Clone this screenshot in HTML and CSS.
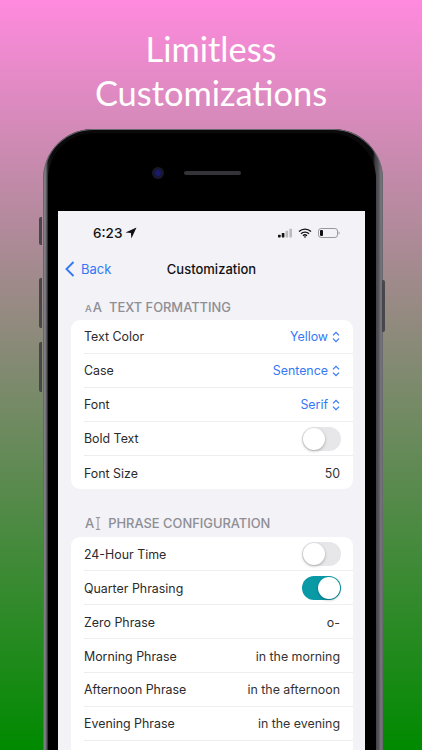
FILE: index.html
```html
<!DOCTYPE html>
<html lang="en">
<head>
<meta charset="utf-8">
<title>Limitless Customizations</title>
<link rel="stylesheet" href="styles.css">
</head>
<body>
<main class="page">
  <h1 class="headline">Limitless<br>Customizations</h1>
  <div class="phone">
    <span class="side-btn btn-mute"></span>
    <span class="side-btn btn-up"></span>
    <span class="side-btn btn-down"></span>
    <span class="side-btn btn-power"></span>
    <div class="bezel">
      <div class="speaker-row">
        <span class="camera"></span>
        <span class="speaker"></span>
      </div>
      <div class="screen">
        <div class="statusbar">
          <div class="status-time">6:23
            <svg class="loc" viewBox="0 0 12 12"><path d="M11.5.5.5 5.6l5.4.5.5 5.4z" fill="#111"/></svg>
          </div>
          <div class="status-icons">
            <svg class="signal" viewBox="0 0 16 10"><rect x="0" y="7" width="3" height="3" rx=".7" fill="#111"/><rect x="4.3" y="5" width="3" height="5" rx=".7" fill="#111"/><rect x="8.6" y="2.5" width="3" height="7.5" rx=".7" fill="#bbb"/><rect x="13" y="0" width="3" height="10" rx=".7" fill="#bbb"/></svg>
            <svg class="wifi" viewBox="0 0 14 10"><path d="M1 3.6a8.6 8.6 0 0 1 12 0M3 5.7a5.8 5.8 0 0 1 8 0M5 7.7a3 3 0 0 1 4 0" fill="none" stroke="#111" stroke-width="1.4"/><path d="M7 10 5.8 8.7a1.8 1.8 0 0 1 2.4 0z" fill="#111"/></svg>
            <svg class="battery" viewBox="0 0 22 10"><rect x=".5" y=".5" width="19" height="9" rx="2.6" fill="none" stroke="#999"/><rect x="2" y="2" width="3" height="6" rx="1" fill="#111"/><path d="M20.6 3.5v3a1.6 1.6 0 0 0 0-3z" fill="#999"/></svg>
          </div>
        </div>
        <nav class="navbar">
          <a class="back">
            <svg class="chev" viewBox="0 0 10 16"><path d="M8.5 1 1.5 8l7 7" fill="none" stroke="#3478f6" stroke-width="1.9"/></svg>
            Back
          </a>
          <div class="nav-title">Customization</div>
        </nav>

        <div class="section-head first">
          <span class="aa"><small>A</small>A</span>
          <span>TEXT FORMATTING</span>
        </div>
        <section class="card">
          <div class="row"><span>Text Color</span><span class="pick">Yellow <svg class="updown" viewBox="0 0 8 12"><path d="M1 4.4 4 1.4l3 3M1 7.6l3 3 3-3" fill="none" stroke="#3478f6" stroke-width="1.2"/></svg></span></div>
          <div class="row"><span>Case</span><span class="pick">Sentence <svg class="updown" viewBox="0 0 8 12"><path d="M1 4.4 4 1.4l3 3M1 7.6l3 3 3-3" fill="none" stroke="#3478f6" stroke-width="1.2"/></svg></span></div>
          <div class="row"><span>Font</span><span class="pick">Serif <svg class="updown" viewBox="0 0 8 12"><path d="M1 4.4 4 1.4l3 3M1 7.6l3 3 3-3" fill="none" stroke="#3478f6" stroke-width="1.2"/></svg></span></div>
          <div class="row"><span>Bold Text</span><span class="toggle"></span></div>
          <div class="row"><span>Font Size</span><span class="val">50</span></div>
        </section>

        <div class="section-head second">
          <span class="aa">A<svg class="ibeam" viewBox="0 0 6 13"><path d="M.8.6h4.4M.8 12.4h4.4M3 .6v11.8" fill="none" stroke="#8e8e93" stroke-width="1"/></svg></span>
          <span>PHRASE CONFIGURATION</span>
        </div>
        <section class="card">
          <div class="row"><span>24-Hour Time</span><span class="toggle"></span></div>
          <div class="row"><span>Quarter Phrasing</span><span class="toggle on"></span></div>
          <div class="row"><span>Zero Phrase</span><span class="val">o-</span></div>
          <div class="row"><span>Morning Phrase</span><span class="val">in the morning</span></div>
          <div class="row"><span>Afternoon Phrase</span><span class="val">in the afternoon</span></div>
          <div class="row"><span>Evening Phrase</span><span class="val">in the evening</span></div>
          <div class="row"></div>
        </section>
      </div>
    </div>
  </div>
</main>
</body>
</html>
```
FILE: styles.css
```css
* { box-sizing: border-box; }
html, body { margin: 0; padding: 0; height: 100%; }
body { overflow: hidden; }
.page {
  width: 422px;
  height: 750px;
  overflow: hidden;
  background: linear-gradient(180deg, #ff8ade 0%, #008a00 100%);
  display: flex;
  flex-direction: column;
  align-items: flex-start;
  font-family: Inter, "Liberation Sans", sans-serif;
}
.headline {
  flex: none;
  width: 422px;
  margin: 27px 0 0;
  color: #fff;
  font-family: Lato, sans-serif;
  font-weight: 400;
  font-size: 34.4px;
  line-height: 44px;
  text-align: center;
  height: 102px;
}
.phone {
  position: relative;
  flex: none;
  width: 340px;
  height: 660px;
  margin-left: 43px;
  border-radius: 50px 50px 0 0;
  background: linear-gradient(90deg, #6f6d73 0, #85838a 2px, #4c4b50 4px, #1a1a1d 5px, #0a0a0c 9px, #0a0a0c calc(100% - 10px), #3b3a40 calc(100% - 8px), #5a585f calc(100% - 4px), #7a7880 calc(100% - 2px), #5e5c62 100%);
  padding: 4px 7px 0 5px;
}
.phone::before {
  content: "";
  position: absolute;
  inset: 0;
  border-radius: inherit;
  border: 1px solid #6a686e;
  border-bottom: 0;
  pointer-events: none;
}
.side-btn {
  position: absolute;
  width: 3px;
  background: #47464b;
}
.btn-mute { left: -4px; top: 88px; height: 28px; border-radius: 2px 0 0 2px; }
.btn-up { left: -4px; top: 149px; height: 50px; border-radius: 2px 0 0 2px; }
.btn-down { left: -4px; top: 213px; height: 50px; border-radius: 2px 0 0 2px; }
.btn-power { right: -2px; top: 151px; height: 52px; border-radius: 0 2px 2px 0; }
.bezel {
  height: 100%;
  border-radius: 46px 46px 0 0;
  background: #000;
  padding: 0 10px;
}
.speaker-row {
  height: 78px;
  display: flex;
  align-items: center;
  justify-content: center;
  gap: 20px;
  padding: 2px 32px 0 0;
}
.camera {
  width: 12px;
  height: 12px;
  border-radius: 50%;
  background: radial-gradient(circle, #1a1a6a 0 25%, #15152c 50%, #222 100%);
}
.speaker {
  width: 57px;
  height: 4px;
  border-radius: 2px;
  background: #333338;
}
.screen {
  width: 307px;
  height: 578px;
  background: #f2f2f7;
  overflow: hidden;
}
.statusbar {
  height: 40px;
  padding: 4px 25px 0 35px;
  display: flex;
  align-items: center;
  justify-content: space-between;
}
.status-time {
  display: flex;
  align-items: center;
  gap: 3px;
  font-size: 13.5px;
  font-weight: 500;
  color: #111;
}
.loc { width: 12px; height: 12px; }
.status-icons { display: flex; align-items: center; gap: 6px; }
.signal { width: 14px; height: 10px; }
.wifi { width: 14px; height: 10px; }
.battery { width: 22px; height: 10px; }
.navbar {
  position: relative;
  height: 36px;
  display: flex;
  align-items: center;
  justify-content: center;
}
.back {
  position: absolute;
  left: 7px;
  top: 0;
  height: 36px;
  display: flex;
  align-items: center;
  gap: 6px;
  color: #3478f6;
  font-size: 13px;
}
.chev { width: 10px; height: 16px; }
.nav-title {
  font-size: 13px;
  font-weight: 500;
  color: #111;
}
.section-head {
  display: flex;
  align-items: center;
  gap: 7px;
  padding-left: 27px;
  color: #8e8e93;
  font-size: 12.9px;
  font-weight: 500;
  height: 20px;
}
.section-head.first { margin-top: 10px; margin-bottom: 3px; }
.section-head.second { margin-top: 24px; margin-bottom: 4px; }
.aa {
  display: inline-flex;
  align-items: baseline;
  gap: 1px;
  font-size: 13px;
}
.aa small { font-size: 9.5px; }
.ibeam { width: 6px; height: 13px; align-self: center; }
.card {
  margin: 0 12px 0 13px;
  background: #fff;
  border-radius: 9px;
}
.row {
  height: 33.9px;
  margin-left: 13px;
  padding: 1px 13px 0 0;
  display: flex;
  align-items: center;
  justify-content: space-between;
  font-size: 12.4px;
  color: #2a2a2c;
  border-bottom: 1px solid #eeeef0;
}
.row:last-child { border-bottom: 0; }
.pick {
  display: inline-flex;
  align-items: center;
  gap: 4px;
  color: #3478f6;
}
.updown { width: 8px; height: 12px; }
.val { color: #333; }
.toggle {
  position: relative;
  width: 39px;
  height: 24px;
  margin-right: -1px;
  border-radius: 12px;
  background: #e7e7ea;
}
.toggle::after {
  content: "";
  position: absolute;
  left: 1px;
  top: 1px;
  width: 22px;
  height: 22px;
  border-radius: 50%;
  background: #fff;
  box-shadow: 0 1px 3px rgba(0,0,0,.3);
}
.toggle.on { background: #0a9aa6; }
.toggle.on::after { left: 16px; }
```
